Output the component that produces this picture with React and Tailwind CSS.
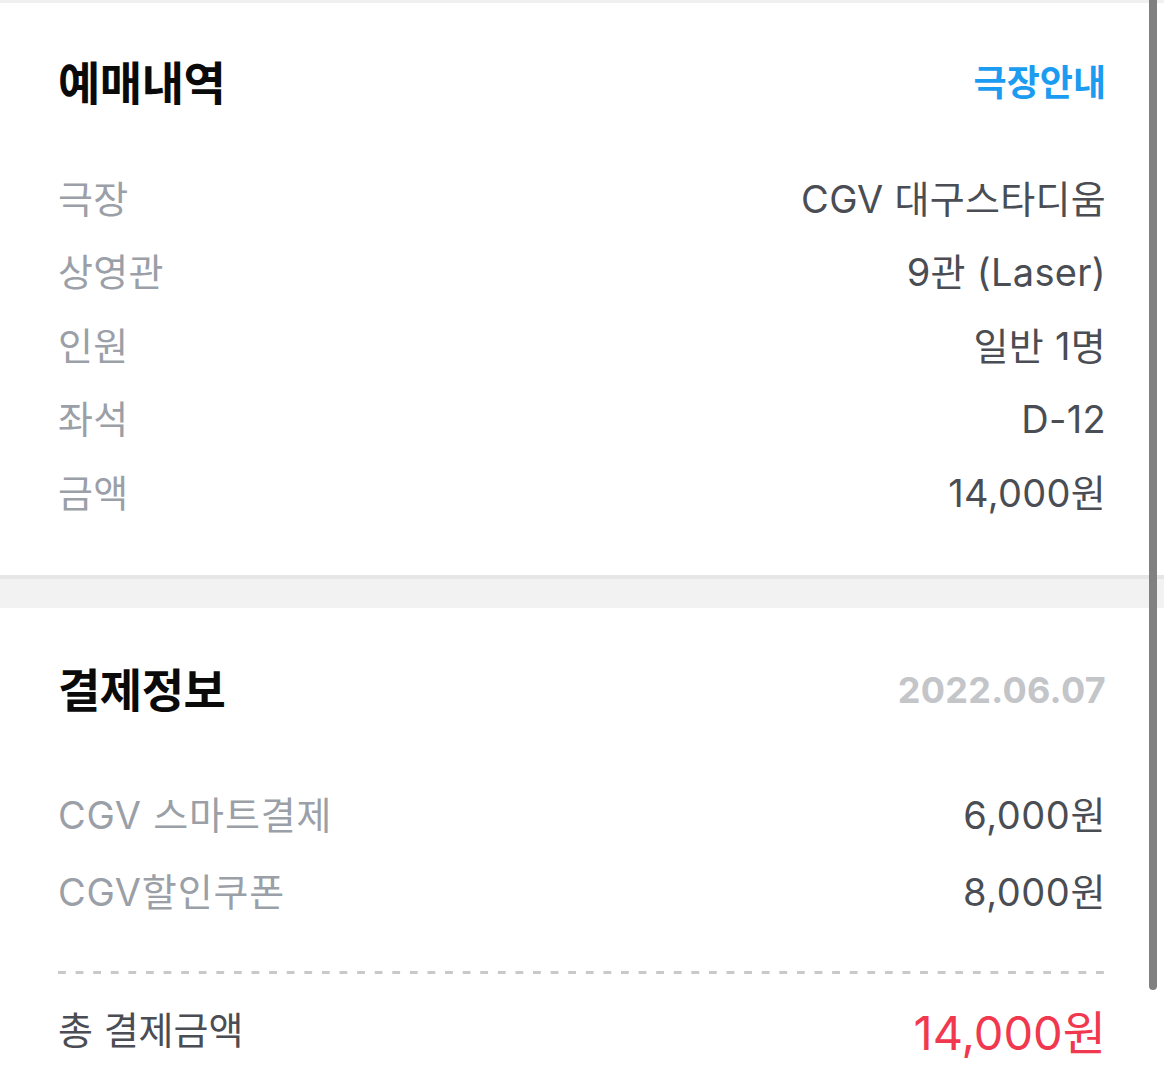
export default function App() {
  const font = "font-['Inter','Noto_Sans_CJK_KR',sans-serif]";
  const booking = [
    ["극장", "CGV 대구스타디움"],
    ["상영관", "9관 (Laser)"],
    ["인원", "일반 1명"],
    ["좌석", "D-12"],
    ["금액", "14,000원"],
  ];
  const payments = [
    ["CGV 스마트결제", "6,000원"],
    ["CGV할인쿠폰", "8,000원"],
  ];
  return (
    <div className={`relative w-[1164px] h-[1092px] overflow-hidden bg-white ${font}`}>
      <div className="h-[3px] bg-[#f0f0f0]" />
      <section className="px-[58px] pb-[45.5px]">
        <div className="h-[159px] flex items-center justify-between">
          <h2 className="text-[46px] leading-none font-bold text-[#0a0a0a] tracking-[-0.5px]">예매내역</h2>
          <span className="text-[36px] leading-none font-semibold text-[#1b9cf0]">극장안내</span>
        </div>
        {booking.map(([k, v]) => (
          <div key={k} className="h-[73.5px] flex items-center justify-between text-[38px] leading-none tracking-[0.3px]">
            <span className="text-[#9b9fa7]">{k}</span>
            <span className="text-[#4a4d53]">{v}</span>
          </div>
        ))}
      </section>
      <div className="h-[4px] bg-[#e6e6e6]" />
      <div className="h-[29px] bg-[#f2f2f2]" />
      <section className="px-[58px]">
        <div className="h-[164px] flex items-center justify-between">
          <h2 className="text-[46px] leading-none font-bold text-[#0a0a0a] tracking-[-0.5px]">결제정보</h2>
          <span className="text-[36px] leading-none font-bold text-[#c3c5c9] tracking-[0.3px]">2022.06.07</span>
        </div>
        <div className="pt-[4px]">
          {payments.map(([k, v]) => (
            <div key={k} className="h-[77px] flex items-center justify-between text-[38px] leading-none tracking-[0.3px]">
              <span className="text-[#9b9fa7] tracking-[0.8px]">{k}</span>
              <span className="text-[#4a4d53] tracking-[0.6px]">{v}</span>
            </div>
          ))}
        </div>
        <div className="mt-[41px] h-[3px] bg-[linear-gradient(to_right,#c9c9c9_0,#c9c9c9_7.5px,transparent_7.5px)] bg-size-[17.6px_3px] bg-repeat-x" />
        <div className="h-[112px] flex items-center justify-between">
          <span className="text-[38px] leading-none text-[#4a4d53]">총 결제금액</span>
          <span className="text-[47px] leading-none text-[#f0384f] pt-[4px]">14,000원</span>
        </div>
      </section>
      <div className="absolute left-[1149px] top-0 w-[8px] h-[990px] rounded-b-full bg-[#808080]" />
    </div>
  );
}
